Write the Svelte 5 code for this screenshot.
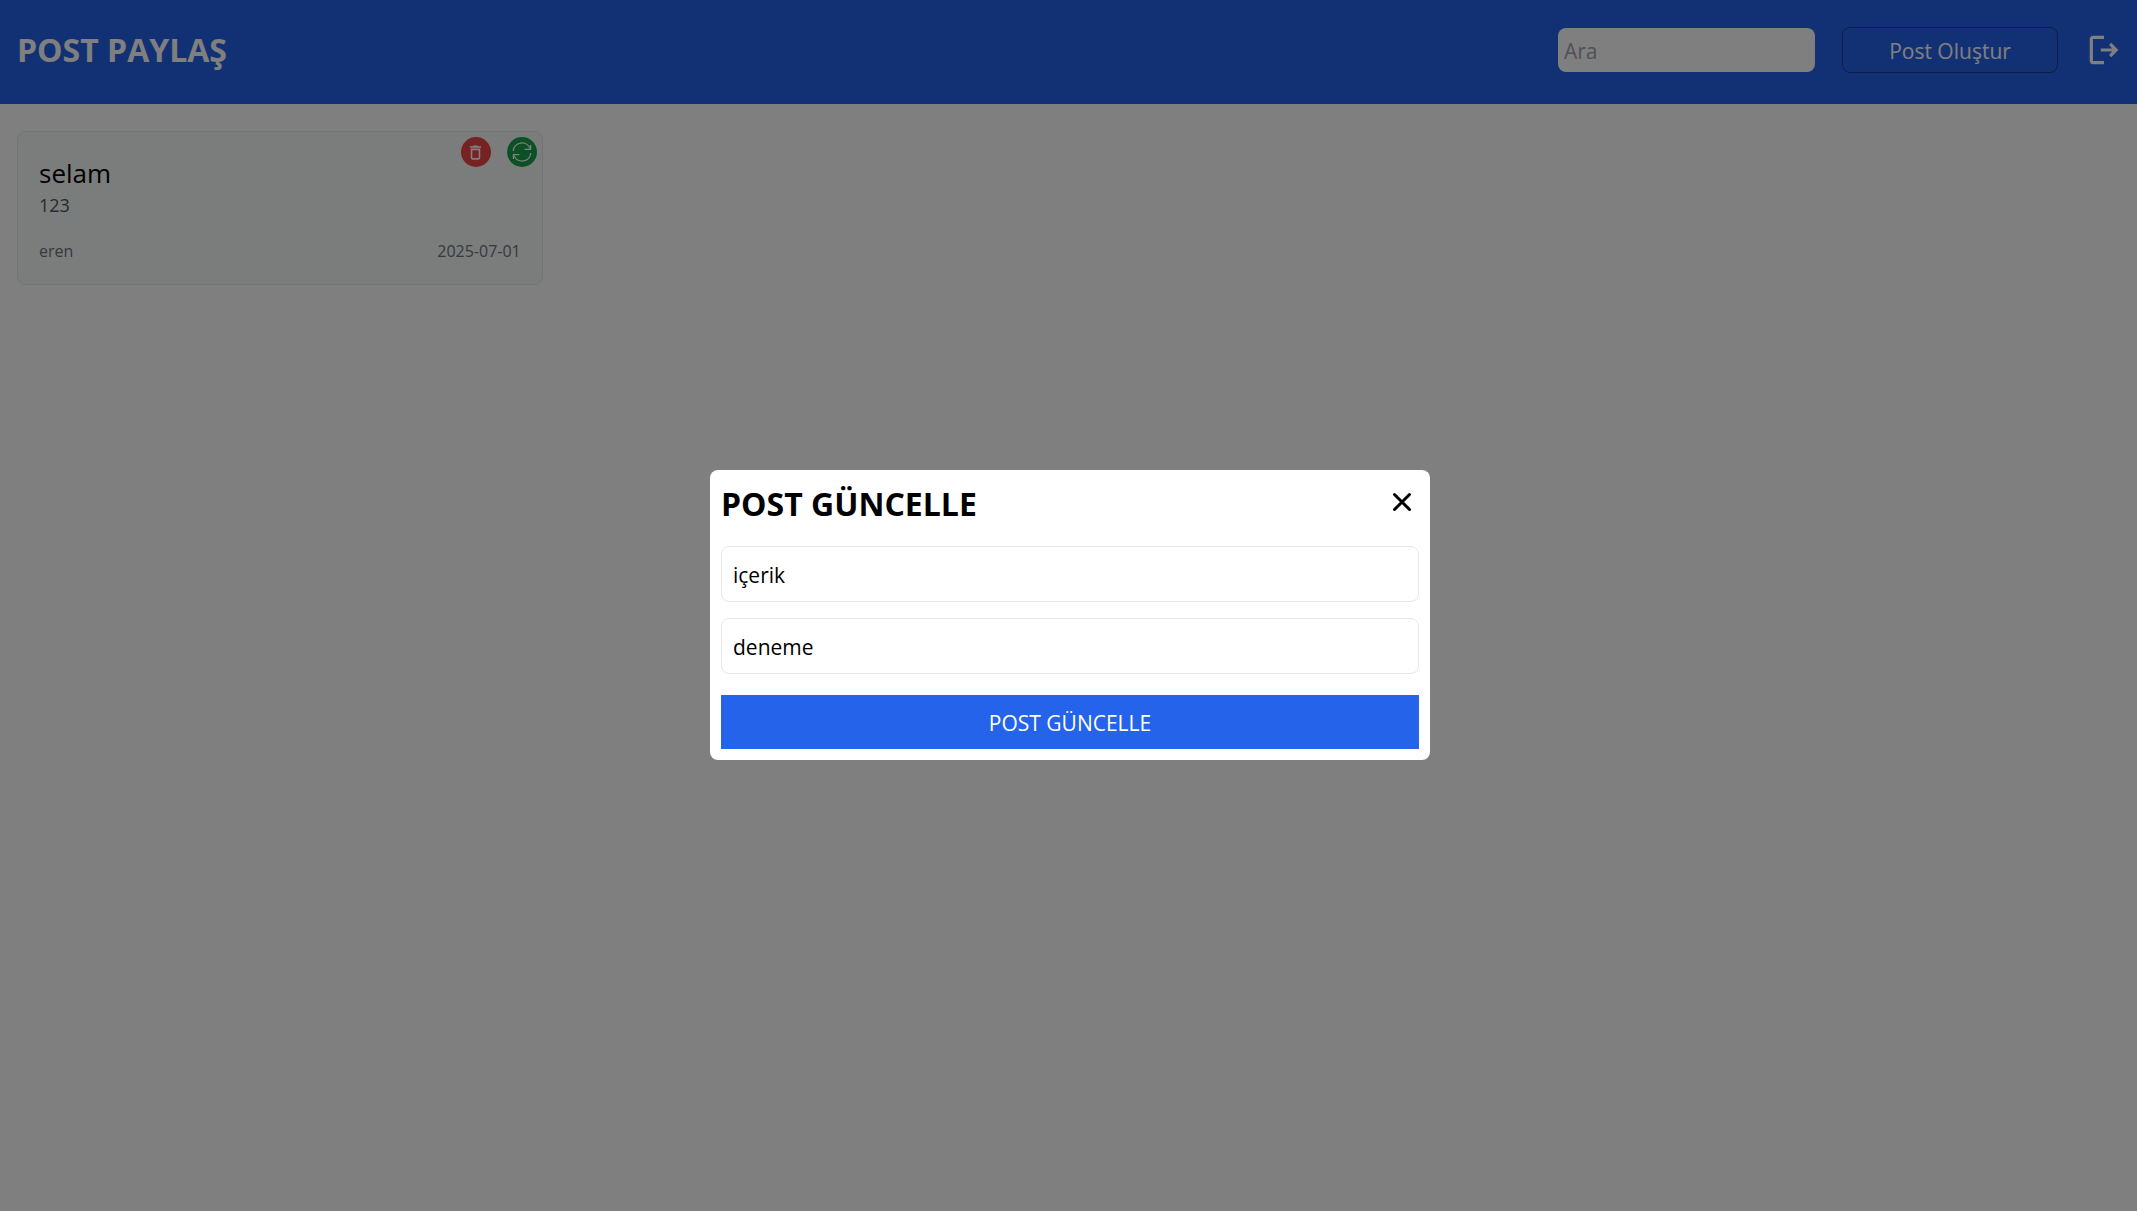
<script>
  let search = $state('');
  let title = $state('içerik');
  let body = $state('deneme');
  let open = $state(true);

  const posts = [{ title: 'selam', text: '123', author: 'eren', date: '2025-07-01' }];
</script>

<div class="page">
  <header>
    <h1>POST PAYLAŞ</h1>
    <div class="actions">
      <input class="search" type="text" placeholder="Ara" aria-label="Ara" bind:value={search} />
      <button class="create" type="button">Post Oluştur</button>
      <button class="icon logout" type="button" aria-label="Çıkış">
        <svg viewBox="0 0 24 24" width="38" height="38" fill="currentColor">
          <path d="M12 21H5c-1.100 0-2-.9-2-2V5c0-1.100.9-2 2-2h7v2H5v14h7z" />
          <path d="M21 12l-4.400-4.600-1.400 1.400L17.200 11H10v2h7.200l-2 2.200 1.400 1.400z" />
        </svg>
      </button>
    </div>
  </header>

  <main>
    {#each posts as post}
      <article>
        <div class="tools">
          <button class="icon round red" type="button" aria-label="Sil">
            <svg viewBox="0 0 24 24" width="19" height="19" fill="currentColor">
              <path d="M6 19c0 1.100.9 2 2 2h8c1.100 0 2-.9 2-2V7H6v12zM8 9h8v10H8V9zm7.500-5l-1-1h-5l-1 1H5v2h14V4z" />
            </svg>
          </button>
          <button class="icon round green" type="button" aria-label="Güncelle">
            <svg viewBox="0 0 20 20" width="20" height="20" fill="none" stroke="currentColor" stroke-width="1.300">
              <path d="M1.200 9a8.800 8.800 0 0 1 16.800-2.800M18.600 3v4.300h-6M18.800 11a8.800 8.800 0 0 1-16.800 2.800M1.400 17v-4.300h6" />
            </svg>
          </button>
        </div>
        <h2>{post.title}</h2>
        <p>{post.text}</p>
        <div class="meta">
          <span>{post.author}</span>
          <time datetime={post.date}>{post.date}</time>
        </div>
      </article>
    {/each}
  </main>
</div>

{#if open}
  <div class="overlay">
    <form class="modal" aria-labelledby="modal-title" onsubmit={(e) => e.preventDefault()}>
      <div class="modal-head">
        <h2 id="modal-title">POST GÜNCELLE</h2>
        <button class="icon close" type="button" aria-label="Kapat" onclick={() => (open = false)}>
          <svg viewBox="0 0 20 20" width="20" height="20" fill="none" stroke="currentColor" stroke-width="3" stroke-linecap="round">
            <path d="M2.500 2.500l15 15M17.500 2.500l-15 15" />
          </svg>
        </button>
      </div>
      <input type="text" aria-label="Başlık" bind:value={title} />
      <input type="text" aria-label="İçerik" bind:value={body} />
      <button class="submit" type="submit">POST GÜNCELLE</button>
    </form>
  </div>
{/if}

<style>
  :global(body) {
    background: #fff;
    color: #000;
    font-family: 'Segoe UI', 'Open Sans', 'Noto Sans', sans-serif;
    font-size: 21px;
    line-height: 32px;
  }

  .page,
  .page *,
  .overlay,
  .overlay * {
    box-sizing: border-box;
    margin: 0;
  }

  button,
  input {
    font: inherit;
    color: inherit;
  }

  button {
    cursor: pointer;
  }

  svg {
    display: block;
  }

  .icon {
    display: flex;
    align-items: center;
    justify-content: center;
    padding: 0;
    border: 0;
    background: none;
  }

  header {
    display: flex;
    align-items: center;
    justify-content: space-between;
    padding: 27px 14px 31px 17px;
    background: #2563eb;
    color: #fff;
  }

  h1,
  .modal-head h2 {
    font-size: 32px;
    line-height: 46px;
    font-weight: 700;
  }

  .actions {
    display: flex;
    align-items: center;
    gap: 27px;
  }

  .search {
    width: 257px;
    height: 44px;
    padding: 2px 6px 0;
    border: 0;
    border-radius: 8px;
    background: #fff;
    color: #000;
  }

  .search::placeholder {
    color: #9ca3af;
    opacity: 1;
  }

  .create {
    width: 216px;
    height: 46px;
    padding: 2px 0 0;
    border: 1px solid #1e3a8a;
    border-radius: 8px;
    background: none;
  }

  main {
    display: grid;
    grid-template-columns: repeat(4, 1fr);
    padding: 27px 17px;
  }

  article {
    position: relative;
    padding: 22px 21px;
    border: 1px solid #e5e7eb;
    border-radius: 8px;
    background: #f6fbf8;
  }

  .tools {
    position: absolute;
    top: 5px;
    right: 5px;
    display: flex;
    gap: 16px;
  }

  .round {
    width: 30px;
    height: 30px;
    border-radius: 50%;
    color: #fff;
  }

  .red {
    background: #ef4444;
  }

  .green {
    background: #16a34a;
  }

  article h2 {
    font-size: 26px;
    line-height: 38px;
    font-weight: 400;
  }

  article p {
    color: #4b5563;
    font-size: 18px;
    line-height: 26px;
  }

  .meta {
    display: flex;
    justify-content: space-between;
    margin-top: 22px;
    color: #6b7280;
    font-size: 16px;
    line-height: 22px;
  }

  .overlay {
    position: fixed;
    inset: 0;
    display: flex;
    align-items: center;
    justify-content: center;
    padding: 19px 0 0 3px;
    background: rgba(0, 0, 0, 0.5);
  }

  .modal {
    display: flex;
    flex-direction: column;
    width: 720px;
    max-width: 100%;
    padding: 11px;
    border-radius: 8px;
    background: #fff;
  }

  .modal-head {
    display: flex;
    align-items: flex-start;
    justify-content: space-between;
    margin-bottom: 19px;
  }

  .close {
    width: 34px;
    height: 42px;
  }

  .modal > input {
    height: 56px;
    margin-bottom: 16px;
    padding: 2px 11px 0;
    border: 1px solid #e5e7eb;
    border-radius: 8px;
    background: #fff;
  }

  .submit {
    height: 54px;
    margin-top: 5px;
    padding: 2px 0 0;
    border: 0;
    background: #2563eb;
    color: #fff;
  }
</style>
